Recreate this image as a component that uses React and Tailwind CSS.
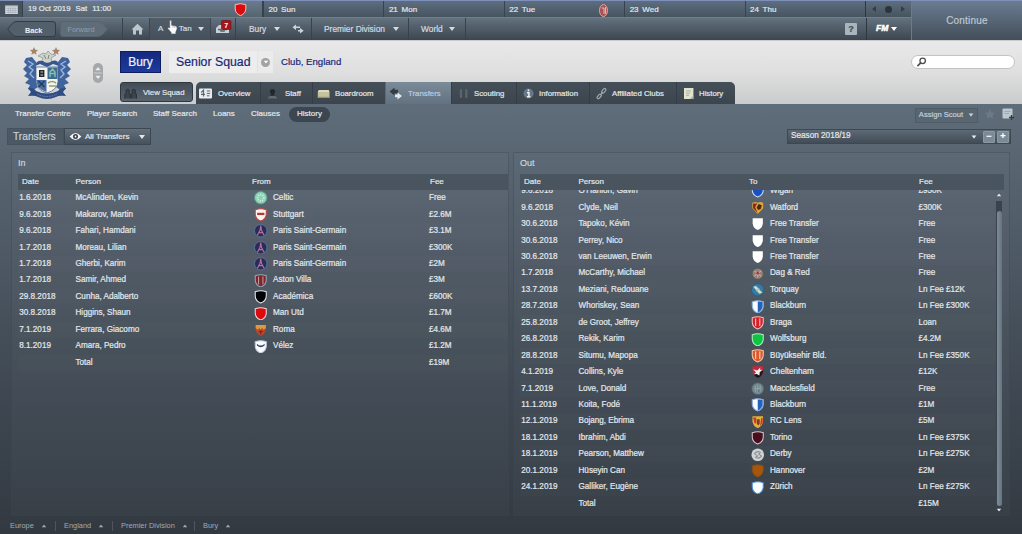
import React from "react";

const SHIELD = "M1.2 1.6 Q6.5 -0.2 11.8 1.6 V6 Q11.6 10.6 6.5 12.6 Q1.4 10.6 1.2 6 Z";

function Shield({ fill, stroke, children }) {
  return (
    <>
      <path d={SHIELD} fill={fill} stroke={stroke} strokeWidth="1" />
      {children}
    </>
  );
}

const badges = {
  celtic: (
    <>
      <circle cx="6.5" cy="6.5" r="6" fill="#8fd0b6" stroke="#4f9c83" strokeWidth=".8" />
      <circle cx="6.5" cy="6.5" r="3" fill="none" stroke="#c9efe0" strokeWidth="1.6" strokeDasharray="1.2 1" />
    </>
  ),
  stuttgart: <Shield fill="#fff1ee" stroke="#c3473f"><rect x="3" y="4.6" width="7" height="2.2" fill="#b03a36" /></Shield>,
  psg: (
    <>
      <circle cx="6.5" cy="6.5" r="6" fill="#2b2b55" stroke="#5276a3" strokeWidth=".9" />
      <path d="M6.5 1.5 L7.2 6 L9.8 11 M6.5 1.5 L5.8 6 L3.2 11 M4.6 8.3 H8.4" fill="none" stroke="#b0709c" strokeWidth="1.1" />
    </>
  ),
  villa: <Shield fill="#7c2730" stroke="#93a9bd"><path d="M4.4 2.5 V10 M8.6 2.5 V10" stroke="#c8a9a8" strokeWidth=".9" /></Shield>,
  black: <Shield fill="#020306" stroke="#e6e9ea" />,
  red: <Shield fill="#dd0a0d" stroke="#f2d9d8" />,
  roma: (
    <>
      <path d="M1.6 2 H11.4 V6 Q11 10.5 6.5 12.4 Q2 10.5 1.6 6 Z" fill="#b9482b" />
      <path d="M1.6 2 H11.4 V5 L9 6.5 L8 4.6 L6.5 6.6 L5 4.6 L4 6.5 L1.6 5 Z" fill="#df9a3f" />
      <path d="M6.5 7 V11 M4.6 8.4 H8.4" stroke="#7d2018" strokeWidth="1" />
    </>
  ),
  velez: <Shield fill="#fbfcfe" stroke="#c4cedc"><path d="M2.8 3.6 Q6.5 7.2 10.2 3.6 V5.4 Q6.5 8.6 2.8 5.4 Z" fill="#34456f" /></Shield>,
  blue: <Shield fill="#1750c8" stroke="#c9daf2" />,
  watford: (
    <>
      <path d="M1.3 1.8 L4 .9 L6.5 1.8 L9 .9 L11.7 1.8 V7 L6.5 12.4 L1.3 7 Z" fill="#e0a63c" />
      <path d="M2 2.5 H6 L4 6 L6.5 11.6 L1.9 6.8 Z" fill="#8d2b1b" />
      <path d="M7.2 3 L10.4 4 L9.4 7.6 L7 8.6 L5.4 6.4 Z" fill="#4d2615" />
    </>
  ),
  white: <path d="M1.6 1.2 H11.4 V6 Q11 10.8 6.5 12.6 Q2 10.8 1.6 6 Z" fill="#fff" />,
  dag: (
    <>
      <circle cx="6.5" cy="6.5" r="5.4" fill="#94827d" stroke="#585552" strokeWidth=".8" />
      <path d="M6.5 4.5 V10 M3.2 3.8 L9.8 8.8 M9.8 3.8 L3.2 8.8" stroke="#d3c4bc" strokeWidth=".8" />
      <circle cx="6.5" cy="6" r="1.4" fill="#a33c38" />
    </>
  ),
  torquay: (
    <>
      <circle cx="6.5" cy="6.5" r="6" fill="#347aa8" stroke="#24587e" strokeWidth=".7" />
      <path d="M2 3.6 L5 3 L11 9.4 L8 10.4 Z" fill="#d4dbb4" />
      <path d="M5 8 L8 5" stroke="#8eb5cf" strokeWidth="1" />
    </>
  ),
  blackburn: <Shield fill="#fafcff" stroke="#86aee0"><path d="M6.5 1.4 Q9.4 1.2 11.2 2 V6 Q10.8 10.2 6.5 12 Z" fill="#2163bd" /></Shield>,
  braga: <Shield fill="#d81f29" stroke="#f2bebd"><path d="M4.5 2.4 V9.6 M8.5 2.4 V9.6" stroke="#fbe6e2" strokeWidth=".9" /></Shield>,
  green: <Shield fill="#0fc443" stroke="#b5efc0" />,
  buyuk: <Shield fill="#e0592c" stroke="#f5c6ab"><path d="M4.5 2.4 V9.6 M8.5 2.4 V9.6" stroke="#fbe0cd" strokeWidth="1" /></Shield>,
  chelt: (
    <>
      <path d="M1.4 1.2 H11.6 V6 Q11 10.8 6.5 12.6 Q2 10.8 1.4 6 Z" fill="#c3283a" />
      <path d="M11.6 5 V6 Q11 10.8 6.5 12.6 Q4 11.4 2.6 9.4 Z" fill="#191a20" />
      <path d="M2 4 L6 5.4 L9 2.4 L8.6 4.6 L11 4.6 L8.4 7 L8 10 L5.6 8.6 L3 9 L4.8 7 Z" fill="#f7eef0" />
    </>
  ),
  macc: (
    <>
      <circle cx="6.5" cy="6.5" r="5.8" fill="#71878e" stroke="#4b6068" strokeWidth=".8" />
      <path d="M4.2 3.5 V9.5 M6.5 2.6 V10.4 M8.8 3.5 V9.5 M3.4 6.4 H9.6" stroke="#93a9a5" strokeWidth=".8" />
      <path d="M7.5 7.4 V9.6" stroke="#6e5a7c" />
    </>
  ),
  lens: (
    <>
      <path d="M1.4 1.2 H11.6 V6 Q11 10.8 6.5 12.6 Q2 10.8 1.4 6 Z" fill="#e1b23c" />
      <path d="M2 2.4 H5 V8 H3.4 Z M9.8 3 H11.2 V7 L8.6 11 Z" fill="#c63c2c" />
      <path d="M5.6 4 H8.4 V8.4 L7 10 L5.6 8.4 Z" fill="#8f3522" />
    </>
  ),
  torino: <Shield fill="#48101f" stroke="#dcc6cb" />,
  derby: (
    <>
      <circle cx="6.5" cy="6.5" r="6.1" fill="#cfd2d3" />
      <path d="M3.4 5.4 Q5.8 2.4 9 4.2 L7.4 5.8 L10 7.8 Q7.6 11 4.4 9 L6.4 7.6 Z" fill="none" stroke="#8b9092" strokeWidth="1" />
    </>
  ),
  brown: <path d={SHIELD} fill="#a3570c" stroke="#8c4a0c" strokeWidth=".8" />,
  zurich: <Shield fill="#fafdff" stroke="#4a8bcb" />,
};

function Badge({ name }) {
  return (
    <svg viewBox="0 0 13 13" className="h-[13.5px] w-[13.5px] shrink-0">
      {badges[name]}
    </svg>
  );
}

const incoming = [
  ["1.6.2018", "McAlinden, Kevin", "celtic", "Celtic", "Free"],
  ["9.6.2018", "Makarov, Martin", "stuttgart", "Stuttgart", "£2.6M"],
  ["9.6.2018", "Fahari, Hamdani", "psg", "Paris Saint-Germain", "£3.1M"],
  ["1.7.2018", "Moreau, Lilian", "psg", "Paris Saint-Germain", "£300K"],
  ["1.7.2018", "Gherbi, Karim", "psg", "Paris Saint-Germain", "£2M"],
  ["1.7.2018", "Samir, Ahmed", "villa", "Aston Villa", "£3M"],
  ["29.8.2018", "Cunha, Adalberto", "black", "Académica", "£600K"],
  ["30.8.2018", "Higgins, Shaun", "red", "Man Utd", "£1.7M"],
  ["7.1.2019", "Ferrara, Giacomo", "roma", "Roma", "£4.6M"],
  ["8.1.2019", "Amara, Pedro", "velez", "Vélez", "£1.2M"],
  ["", "Total", null, "", "£19M"],
];

const outgoing = [
  ["9.6.2018", "O'Hanlon, Gavin", "blue", "Wigan", "£950K"],
  ["9.6.2018", "Clyde, Neil", "watford", "Watford", "£300K"],
  ["30.6.2018", "Tapoko, Kévin", "white", "Free Transfer", "Free"],
  ["30.6.2018", "Perrey, Nico", "white", "Free Transfer", "Free"],
  ["30.6.2018", "van Leeuwen, Erwin", "white", "Free Transfer", "Free"],
  ["1.7.2018", "McCarthy, Michael", "dag", "Dag & Red", "Free"],
  ["13.7.2018", "Meziani, Redouane", "torquay", "Torquay", "Ln Fee £12K"],
  ["28.7.2018", "Whoriskey, Sean", "blackburn", "Blackburn", "Ln Fee £300K"],
  ["25.8.2018", "de Groot, Jeffrey", "braga", "Braga", "Loan"],
  ["26.8.2018", "Rekik, Karim", "green", "Wolfsburg", "£4.2M"],
  ["28.8.2018", "Situmu, Mapopa", "buyuk", "Büyüksehir Bld.", "Ln Fee £350K"],
  ["4.1.2019", "Collins, Kyle", "chelt", "Cheltenham", "£12K"],
  ["7.1.2019", "Love, Donald", "macc", "Macclesfield", "Free"],
  ["11.1.2019", "Koita, Fodé", "blackburn", "Blackburn", "£1M"],
  ["12.1.2019", "Bojang, Ebrima", "lens", "RC Lens", "£5M"],
  ["18.1.2019", "Ibrahim, Abdi", "torino", "Torino", "Ln Fee £375K"],
  ["18.1.2019", "Pearson, Matthew", "derby", "Derby", "Ln Fee £275K"],
  ["20.1.2019", "Hüseyin Can", "brown", "Hannover", "£2M"],
  ["24.1.2019", "Galliker, Eugène", "zurich", "Zürich", "Ln Fee £275K"],
  ["", "Total", null, "", "£15M"],
];

function Caret({ up, className = "" }) {
  return (
    <svg viewBox="0 0 6 4" className={"h-[4px] w-[6px] shrink-0 " + className}>
      <path d={up ? "M0 4 L3 0 L6 4 Z" : "M0 0 L3 4 L6 0 Z"} fill="currentColor" />
    </svg>
  );
}

function Rows({ rows, cols }) {
  return rows.map(([date, person, badge, club, fee], i) => (
    <div key={i} className={"grid h-[16.46px] shrink-0 items-center text-[8.15px] odd:bg-white/[0.01] " + cols}>
      <span className="pl-[1.3px]">{date}</span>
      <span>{person}</span>
      <span className="flex items-center gap-[5.5px] pl-[2px]">
        {badge && <Badge name={badge} />}
        {club}
      </span>
      <span>{fee}</span>
    </div>
  ));
}

function Crest() {
  return (
    <svg viewBox="0 0 48 54" className="h-[54px] w-[48px]">
      <path d="M10 1 l1.2 2.8 2.9 .2 -2.2 1.9 .7 2.9 -2.6-1.6 -2.6 1.6 .7-2.9 -2.2-1.9 2.9-.2z M32 1 l1.2 2.8 2.9 .2 -2.2 1.9 .7 2.9 -2.6-1.6 -2.6 1.6 .7-2.9 -2.2-1.9 2.9-.2z" fill="#a58268" transform="translate(1 0)" />
      <path d="M15 10 L20 7 L23 8 L25 5 L28 8 L33 9 L28 12 L29 17 H18 L20 12 Z" fill="#cfd2c8" stroke="#8f9a96" strokeWidth=".8" />
      <path d="M21 9 l2 4 M26 9 l-1 4" stroke="#7a8584" strokeWidth="1" />
      <path d="M12 20 Q13 14 20 15 Q24 19 29 15 Q35 13 36 20 L30 18 L24 21 L17 18 Z" fill="#34568e" />
      <path d="M13 23 V16 L9 11 L3 12 L1 16 L4 19 L0 23 L4 27 L1 30 L6 33 L2 37 L7 39 L5 43 L9 45 L15 41 Z" fill="#3f639c" />
      <path d="M35 23 V16 L39 11 L45 12 L47 16 L44 19 L48 23 L44 27 L47 30 L42 33 L46 37 L41 39 L43 43 L39 45 L33 41 Z" fill="#3f639c" />
      <path d="M5 15 l5 3 -4 3 4 3 -3 4 4 4 M43 15 l-5 3 4 3 -4 3 3 4 -4 4" fill="none" stroke="#9db5dc" strokeWidth="1.4" />
      <path d="M13 21 H35 V36 Q34 44 24 47 Q14 44 13 36 Z" fill="#f3f4ef" stroke="#52688f" strokeWidth=".8" />
      <path d="M13.400 34 H23.500 V46 Q14 43 13.400 35 Z" fill="#456ea8" />
      <path d="M15.5 35 l6 6 M21.5 35 l-6 6" stroke="#273c5c" strokeWidth="1.5" />
      <rect x="24.500" y="21.500" width="10" height="11.500" fill="#3c6d96" />
      <path d="M27 31 V26 l2.5-3 2.5 3 V31 M27 27.5 h5" fill="none" stroke="#8cc0a8" strokeWidth="1.4" />
      <rect x="16" y="24" width="5.4" height="7" fill="#23282e" />
      <path d="M17.500 26 h2.500 M17.500 29 h2.500" stroke="#d7d9d8" strokeWidth=".9" />
      <path d="M25 37 q4-3 8 0 M26 40 h7" fill="none" stroke="#93a06c" strokeWidth="1.7" />
      <path d="M5 42 Q10 41 13 45 Q24 50 35 45 Q38 41 43 42 L40 46 L43 50 Q36 49 33 51 Q24 55 15 51 Q12 49 5 50 L8 46 Z" fill="#2f4d82" />
      <path d="M14 48 Q24 53 34 48" fill="none" stroke="#6a89ba" strokeWidth="1" strokeDasharray="1.5 1" />
    </svg>
  );
}

const icons = {
  squad: (
    <g fill="#3b444c" stroke="#272d33" strokeWidth=".9">
      <path d="M.8 11.500 V8 Q1 6.300 2.400 6 Q1.600 4 2.200 3 Q3.600 1.600 5 3 Q5.600 4 4.800 6 Q6.200 6.300 6.300 8 V11.500" />
      <path d="M7 11.500 V8 Q7.200 6.300 8.600 6 Q7.800 4 8.400 3 Q9.800 1.600 11.200 3 Q11.800 4 11 6 Q12.300 6.300 12.500 8 V11.500" />
    </g>
  ),
  overview: (
    <>
      <rect x="0" y="1.5" width="13" height="10" rx="1" fill="#e9edef" />
      <path d="M2.200 5.500 L4.500 3.200 V9.400 M2 7.400 H6" stroke="#5b6670" strokeWidth="1.200" fill="none" />
      <path d="M7.800 4 H11.200 M7.800 6.400 H11.200 M7.800 8.800 H10.500" stroke="#5b6670" strokeWidth="1" fill="none" />
    </>
  ),
  staff: (
    <g fill="#22272d">
      <circle cx="6.5" cy="4.6" r="2.6" /><path d="M5 7 H8 L8.5 9 H4.5 Z" />
      <path d="M1.8 11.6 Q2 9 6.5 8.8 Q11 9 11.2 11.6 Z" fill="#5f6b76" />
    </g>
  ),
  board: (
    <>
      <path d="M2 3 H11.500 L12.500 5 V11 H.8 V5 Z" fill="#c6c39c" />
      <path d="M2 3 H11.500 L12.500 5 H.8 Z" fill="#dedcbc" />
      <path d="M.8 9.8 H12.500 V11 H.8 Z" fill="#95937a" />
    </>
  ),
  transfers: (
    <>
      <path d="M5.5 .6 V2.8 H9 V6.4 H5.5 V8.6 L.6 4.6 Z" fill="#343b42" />
      <path d="M8.500 5.400 V7.400 H6 V10.200 H8.500 V12.400 L13 8.900 Z" fill="#e4e8eb" />
    </>
  ),
  scouting: (
    <g fill="#5b656f"><rect x="2.8" y="2" width="2.2" height="9" rx="1" /><rect x="8.200" y="2" width="2.2" height="9" rx="1" /></g>
  ),
  info: (
    <>
      <circle cx="6.5" cy="6.5" r="5" fill="#66798b" />
      <path d="M6.5 2.6 V4.2 M5 5.8 H6.9 V9.6 M5 9.8 H8.4" stroke="#eef2f5" strokeWidth="1.5" fill="none" />
    </>
  ),
  link: (
    <g fill="none" stroke="#9aa6b0" strokeWidth="1.2" strokeLinecap="round">
      <rect x="-1.300" y="-2.600" width="2.600" height="5.200" rx="1.300" transform="translate(8.800 3.800) rotate(40)" />
      <rect x="-1.300" y="-2.600" width="2.600" height="5.200" rx="1.300" transform="translate(4.200 9.400) rotate(40)" />
      <path d="M7.400 5.600 L5.600 7.700" />
    </g>
  ),
  history: (
    <>
      <rect x="2" y="1" width="9.4" height="11" fill="#dfe3cf" />
      <path d="M4 4 H9 M4 6.2 H8 M4 8.4 H7" stroke="#a3ab96" strokeWidth=".9" />
      <path d="M11.4 8.5 V12 H8 Z" fill="#aab29c" />
    </>
  ),
};

function Icon({ name }) {
  return <svg viewBox="0 0 13 13" className="h-[13px] w-[13px] shrink-0">{icons[name]}</svg>;
}

const tabs = [
  ["overview", "Overview", "w-[64px] pl-[2px] gap-[6px]"],
  ["staff", "Staff", "w-[52px] pl-[5px] gap-[6px]"],
  ["board", "Boardroom", "w-[73px] pl-[4px] gap-[5px]"],
  ["transfers", "Transfers", "w-[66px] pl-[3px] gap-[6px]"],
  ["scouting", "Scouting", "w-[65px] pl-[5px] gap-[4px]"],
  ["info", "Information", "w-[73px] pl-[5px] gap-[4px]"],
  ["link", "Affiliated Clubs", "w-[87px] pl-[5px] gap-[4px]"],
  ["history", "History", "w-[59px] pl-[5px] gap-[4px]"],
];

function NavItem({ label, box, pad }) {
  return (
    <div className={"flex items-center justify-between border-r border-[#38424c] " + box + " " + pad}>
      {label}
      <Caret />
    </div>
  );
}

export default function App() {
  return (
    <div className="flex h-[534px] w-[1022px] flex-col overflow-hidden bg-[#333a42] font-['Liberation_Sans',Arial,sans-serif] text-[8px] leading-none whitespace-nowrap text-[#e3e8ec] [-webkit-text-stroke:0.2px]">
      {/* Calendar strip and main navigation */}
      <div className="flex h-[40px] shrink-0 border-t border-[#7c90bb]">
        <div className="flex w-[911px] flex-col">
          <div className="flex h-[16px] bg-linear-to-b from-[#5d6e7f] to-[#475460]">
            <div className="flex w-[23px] items-center justify-center border-r border-[#36414c] bg-[#46525e]">
              <svg viewBox="0 0 14 10" className="h-[9px] w-[13px]">
                <rect width="14" height="10" fill="#d3d9dd" />
                <path d="M1 3.8 H13 M1 6 H13 M1 8.2 H13 M3.5 2.5 V9.5 M6 2.5 V9.5 M8.5 2.5 V9.5 M11 2.5 V9.5" stroke="#98a4ae" strokeWidth=".6" />
                <path d="M0 .8 H14" stroke="#7b8994" strokeWidth="1.2" />
              </svg>
            </div>
            <div className="flex w-[240px] items-center justify-between border-r border-[#34404b] bg-linear-to-b from-[#6b7b8d] to-[#56646f] pr-[15px] pl-[5px] text-[7.8px]">
              <span className="flex gap-[5px]"><span>19 Oct 2019</span><span>Sat</span><span>11:00</span></span>
              <svg viewBox="0 0 13 13" className="h-[15px] w-[13px]"><Shield fill="#dd0a0d" stroke="#f1c4c4" /></svg>
            </div>
            {["20 Sun", "21 Mon", "22 Tue", "23 Wed", "24 Thu"].map((d) => (
              <div key={d} className="flex w-[120.4px] shrink-0 items-center justify-between border-l border-[#37434e] pt-[2px] pr-[14px] pl-[4.5px] [word-spacing:1.5px]">
                {d}
                {d === "22 Tue" && (
                  <svg viewBox="0 0 9 13" className="mr-[2px] h-[13px] w-[9px]">
                    <ellipse cx="4.5" cy="6.5" rx="4" ry="6" fill="#a8504f" stroke="#d9a7a4" strokeWidth="1" />
                    <path d="M2.6 4 H5 V10 M6.6 3 V10" stroke="#f0dcd9" strokeWidth=".8" fill="none" />
                  </svg>
                )}
              </div>
            ))}
            <div className="flex flex-1 items-center justify-between border-l border-[#2d3740] px-[5px] text-[#333d46]">
              <Caret className="rotate-90" />
              <span className="h-[7px] w-[7px] rounded-full bg-[#2c343b]" />
              <Caret className="-rotate-90" />
            </div>
          </div>
          <div className="flex h-[23px] border-t border-[#6e7f8d] bg-linear-to-b from-[#63727f] to-[#3c4650] text-[#d3dae0]">
            <div className="flex w-[123px] items-center gap-[4px] border-r border-[#38424c] pl-[7px]">
              <svg viewBox="0 0 49 16" className="h-[16px] w-[49px]">
                <path d="M9 .5 H46 Q48.500 .5 48.500 3 V13 Q48.500 15.500 46 15.500 H9 Q6 15.500 .8 8 Q6 .5 9 .5 Z" fill="#52606c" stroke="#323c46" />
                <text x="26.700" y="11.500" textAnchor="middle" fontSize="7.3" fontWeight="bold" fill="#eef1f3">Back</text>
              </svg>
              <svg viewBox="0 0 48 16" className="h-[16px] w-[48px]">
                <path d="M3 .5 H38 Q42 .5 47.400 8 Q42 15.500 38 15.500 H3 Q.5 15.500 .5 13 V3 Q.5 .5 3 .5 Z" fill="#5f6d79" stroke="#57646f" />
                <text x="21" y="11" textAnchor="middle" fontSize="7.4" fill="#929daa">Forward</text>
              </svg>
            </div>
            <div className="flex w-[26px] items-center justify-center pl-[3px]">
              <svg viewBox="0 0 13 12" className="h-[12px] w-[13px]"><path d="M6.500 .8 L12.500 6.500 H11 V11.500 H8 V7.500 H5 V11.500 H2 V6.500 H.5 Z" fill="#bcc5cc" /></svg>
            </div>
            <div className="relative flex w-[62px] items-center justify-between border-x border-[#3c4650] bg-[#48545f]/70 pr-[6px] pl-[8px]">
              <span className="flex gap-[15.5px]"><span>A</span><span>Tan</span></span>
              <Caret />
              <svg viewBox="0 0 12 16" className="absolute top-[1px] left-[17px] h-[16px] w-[11px]">
                <path d="M3 1 Q4.300 0 5 1.500 V6 L9.500 7 Q11.400 7.600 11 10 L9.600 13.500 V15.500 H4.500 V14 L.8 9.500 Q1 7.800 3 9 Z" fill="#fbfbfc" stroke="#53606c" strokeWidth=".6" />
                <path d="M6.500 6.500 V9 M8.500 7 V9" stroke="#8b959e" strokeWidth=".6" />
              </svg>
            </div>
            <div className="flex w-[25px] items-center border-r border-[#38424c] pl-[4px]">
              <svg viewBox="0 0 17 15" className="mt-[-3px] h-[15px] w-[17px]">
                <path d="M1 13 V8 L4 5 H11 L14 9 V13 Z" fill="#c9d0d6" />
                <path d="M3 9.500 H6 V11 H9 V9.500 H12" fill="none" stroke="#5a6671" strokeWidth="1.500" />
                <rect x="6.500" y=".5" width="9.500" height="9" rx="1" fill="#a4161c" stroke="#701219" strokeWidth=".6" />
                <text x="11.300" y="7.600" fontSize="7" fontWeight="bold" fill="#fff" textAnchor="middle">7</text>
              </svg>
            </div>
            <div className="flex w-[76px] items-center border-r border-[#38424c] pl-[13px]">
              <span className="text-[8.4px]">Bury</span>
              <Caret className="ml-[8px]" />
              <svg viewBox="0 0 12 10" className="ml-[12px] h-[10px] w-[12px]"><path d="M4 .5 V2.500 H8 V4 H4 V6 L.5 3.200 Z M8 4 V6 H6 V7.600 H8 V9.600 L11.700 6.800 Z" fill="#cdd4da" /></svg>
            </div>
            <NavItem label="Premier Division" box="w-[97px] text-[8.4px]" pad="pl-[12px] pr-[9px]" />
            <NavItem label="World" box="w-[57px] text-[8.4px]" pad="pl-[12px] pr-[10px]" />
            <div className="flex flex-1 items-center justify-end pr-[9px]">
              <span className="flex h-[12px] w-[12px] items-center justify-center rounded-[1px] bg-[#a9b5bd] text-[9px] font-bold text-[#3f4a54]">?</span>
            </div>
            <div className="flex w-[45px] items-center gap-[3px] border-l border-[#2e3740] pb-px pl-[9px] text-[8.500px] font-bold text-white italic [-webkit-text-stroke:0.5px]">FM<Caret /></div>
          </div>
        </div>
        <div className="flex flex-1 items-center justify-center border-l border-[#6b7b8a] bg-linear-to-b from-[#6b7c92] to-[#434e59] text-[10px] tracking-[0.2px] text-[#bdc8d1]">Continue</div>
      </div>

      {/* Club header */}
      <div className="flex h-[64px] shrink-0 border-t border-[#c8cacb] bg-linear-to-b from-[#e9e9e9] via-[#dfdfdf] to-[#c9cbcc]">
        <div className="flex w-[120px] pl-[23px]">
          <div className="pt-[5px]"><Crest /></div>
          <svg viewBox="0 0 11 22" className="mt-[21px] ml-[22px] h-[22px] w-[10px]">
            <rect width="11" height="22" rx="5.500" fill="#a5a7a8" />
            <path d="M2.500 8 L5.500 4.500 L8.500 8 Z M2.500 14 L5.500 17.500 L8.500 14 Z" fill="#eceded" />
            <path d="M1 11 H10" stroke="#d3d4d4" strokeWidth="1" />
          </svg>
        </div>
        <div className="flex w-[780px] flex-col justify-between">
          <div className="mt-[10px] flex h-[22px] items-stretch text-[#1b2878]">
            <div className="flex w-[41px] items-center justify-center border border-[#0d1d60] bg-linear-to-b from-[#152a80] to-[#1e3a9b] text-[12px] text-[#f1f3fa]">Bury</div>
            <div className="ml-[8px] flex w-[88px] items-center bg-[#ededed] pl-[7px] text-[12.3px]">Senior Squad</div>
            <div className="ml-px flex w-[15px] items-center justify-center bg-[#ebebeb]">
              <span className="flex h-[9px] w-[9px] items-center justify-center rounded-full bg-[#9fa3a5] text-white"><Caret className="scale-[0.8]" /></span>
            </div>
            <div className="ml-[8px] flex items-center text-[9.6px]">Club, England</div>
          </div>
          <div className="flex h-[22px] items-start text-[7.8px]">
            <div className="flex h-[20px] w-[73px] items-center gap-[6px] rounded-[3px] border border-[#2f373f] bg-linear-to-b from-[#434d57] to-[#59646e] pt-[2px] pl-[3px]"><Icon name="squad" />View Squad</div>
            <div className="ml-[3px] flex h-[22px] overflow-hidden rounded-t-[5px] bg-linear-to-b from-[#454f59] to-[#3c454e]">
              {tabs.map(([icon, label, cls]) => (
                <div key={label} className={"flex shrink-0 items-center border-l pt-px " + cls + (label === "Transfers" ? " border-[#5c6a76] bg-linear-to-b from-[#7b8b98] to-[#627280] text-[#b9cde4]" : " border-[#353e47] first:border-transparent")}>
                  <Icon name={icon} />
                  {label}
                </div>
              ))}
            </div>
          </div>
        </div>
        <div className="mt-[14px] ml-[11px] flex h-[14px] w-[104px] items-center rounded-full border border-[#c1c3c4] bg-white pl-[4px]">
          <svg viewBox="0 0 11 11" className="h-[10px] w-[11px]"><circle cx="6.800" cy="4.200" r="3" fill="none" stroke="#484d52" strokeWidth="1.400" /><path d="M4.600 6.400 L1 10" stroke="#484d52" strokeWidth="1.900" /></svg>
        </div>
      </div>

      {/* Transfers content */}
      <div className="flex flex-1 flex-col bg-linear-to-b from-[#5f6d7a] via-[#454f5a] via-[52%] to-[#323941]">
        <div className="flex h-[20px] items-center pl-[15px]">
          <span className="w-[72px]">Transfer Centre</span>
          <span className="w-[66px]">Player Search</span>
          <span className="w-[60px]">Staff Search</span>
          <span className="w-[38px]">Loans</span>
          <span className="w-[38px]">Clauses</span>
          <span className="flex h-[15px] w-[41px] items-center justify-center rounded-full bg-[#3c4651]">History</span>
          <span className="mt-[2px] ml-auto flex h-[15px] w-[63px] items-center justify-center gap-[5px] border border-[#4f5c68] bg-[#586672] text-[7.6px] text-[#c2d0dc]">Assign Scout<Caret className="scale-[0.85]" /></span>
          <svg viewBox="0 0 12 12" className="ml-[6px] h-[12px] w-[12px]"><path d="M6 .8 L7.500 4.400 L11.400 4.700 L8.400 7.200 L9.400 11 L6 8.900 L2.600 11 L3.600 7.200 L.6 4.700 L4.500 4.400 Z" fill="#6c7a87" /></svg>
          <svg viewBox="0 0 12 12" className="mr-[8px] ml-[6px] h-[12px] w-[12px]"><rect x=".5" y=".5" width="10" height="10" rx="1" fill="#bcc8d0" /><path d="M2.500 3.500 H8.500 M2.500 5.500 H7" stroke="#93a1ac" strokeWidth=".8" /><path d="M9.500 7 V12 M7 9.500 H12" stroke="#2f3941" strokeWidth="1.300" /></svg>
        </div>
        <div className="mt-[4px] flex h-[17px] items-center pl-[7px]">
          <div className="flex h-[17px] w-[57px] items-center border border-[#46525d] bg-[#4c5864] pt-[2px] pl-[5px] text-[10.2px] text-[#c5d2dd]">Transfers</div>
          <div className="flex h-[17px] w-[87px] items-center border border-[#3d4751] bg-linear-to-b from-[#63707c] to-[#46515c] pl-[4px]">
            <svg viewBox="0 0 14 10" className="h-[9px] w-[13px]"><path d="M.5 5 Q7 -3 13.500 5 Q7 13 .5 5 Z" fill="#f4f6f7" /><circle cx="7" cy="5" r="2.800" fill="#36414b" /><circle cx="7" cy="5" r="1" fill="#f4f6f7" /></svg>
            <span className="ml-[3px]">All Transfers</span>
            <Caret className="mr-[5px] ml-auto" />
          </div>
          <div className="ml-auto flex h-[15px] w-[224px] items-center border border-[#3d4852] bg-linear-to-b from-[#5d6a76] to-[#414c56] pl-[3px]">
            <span className="text-[8.2px]">Season 2018/19</span>
            <Caret className="mr-[6px] ml-auto scale-[0.85]" />
            <span className="flex h-[12px] w-[12px] items-center justify-center rounded-[1px] border border-[#8b99a4] bg-[#7b8a96] text-[9px] font-bold text-white">−</span>
            <span className="mr-px ml-[2px] flex h-[12px] w-[12px] items-center justify-center rounded-[1px] border border-[#8b99a4] bg-[#7b8a96] text-[9px] font-bold text-white">+</span>
          </div>
          <div className="w-[11px]" />
        </div>

        <div className="mt-[7px] flex h-[364px] gap-[4px] pl-[11px]">
          <section className="flex w-[498px] flex-col border border-[#3b444d]/40 bg-white/[0.025] pl-[6px]">
            <h2 className="flex h-[21px] shrink-0 items-center pb-px text-[9px] text-[#c9d4dd]">In</h2>
            <div className="grid h-[16px] shrink-0 grid-cols-[57px_177px_178px_1fr] items-center bg-[#3f4953]/60">
              <span className="pl-[4px]">Date</span><span className="pl-[0.5px]">Person</span><span>From</span><span>Fee</span>
            </div>
            <Rows rows={incoming} cols="grid-cols-[57.5px_176.5px_177px_1fr]" />
          </section>
          <section className="flex w-[497px] flex-col border border-[#3b444d]/40 bg-white/[0.025] pl-[6px]">
            <h2 className="flex h-[21px] shrink-0 items-center pb-px text-[9px] text-[#c9d4dd]">Out</h2>
            <div className="mr-[5px] grid h-[16px] shrink-0 grid-cols-[58.5px_170.5px_170px_1fr] items-center bg-[#3f4953]/60">
              <span className="pl-[4px]">Date</span><span>Person</span><span>To</span><span>Fee</span>
            </div>
            <div className="flex h-[323px] overflow-hidden">
              <div className="mt-[-7px] w-[475px] shrink-0">
                <Rows rows={outgoing} cols="grid-cols-[58.5px_170.5px_169.5px_1fr]" />
              </div>
              <div className="flex w-[8px] shrink-0 flex-col items-center pt-[3px]">
                <Caret up className="scale-[0.8]" />
                <div className="mt-[4px] flex h-[305px] w-[6px] flex-col items-center bg-[#3a434c]">
                  <div className="mt-[10px] w-[5px] flex-1 rounded-full bg-linear-to-r from-[#7d8c98] to-[#667480]" />
                </div>
                <Caret className="mt-[2px] scale-[0.8]" />
              </div>
            </div>
          </section>
        </div>

        <footer className="flex flex-1 items-center pt-[2px] pl-[10px] text-[7.4px] text-[#a1abb4] [-webkit-text-stroke:0]">
          {[["Europe", "w-[45px]"], ["England", "w-[57px]"], ["Premier Division", "w-[82px]"], ["Bury", "w-[40px]"]].map(([name, w], i) => (
            <div key={name} className={"flex h-[10px] items-center " + w + (i ? " border-l border-[#4c5560] pl-[8px]" : "")}>
              {name}
              <Caret up className="ml-[7px] scale-[0.8]" />
            </div>
          ))}
        </footer>
      </div>
    </div>
  );
}
